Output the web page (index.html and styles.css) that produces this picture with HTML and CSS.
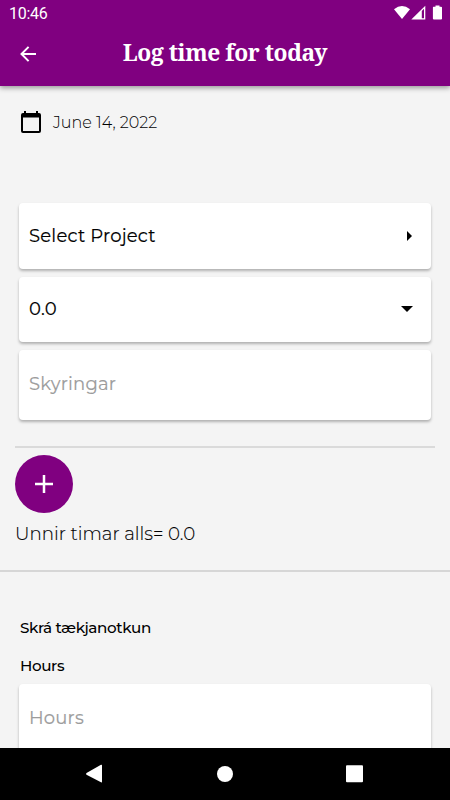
FILE: index.html
```
<!DOCTYPE html>
<html lang="en">
<head>
<meta charset="utf-8">
<title>Log time for today</title>
<link rel="stylesheet" href="styles.css">
</head>
<body>
<div class="screen">
  <header class="header">
    <div class="status">
      <span class="clock">10:46</span>
      <svg class="status-icons" width="48" height="16" viewBox="0 0 48 16">
        <path d="M0 4.2Q8-2.2 16 4.2L8 14Z"/>
        <path fill-rule="evenodd" d="M17.3 14.6L31.3.7V14.6ZM27.8 6V13.3H30V3.8Z"/>
        <path d="M39.5 1.8h2V.5h4v1.3h1.6a1 1 0 0 1 1 1v10.7a1 1 0 0 1-1 1h-7.2a1 1 0 0 1-1-1V2.8a1 1 0 0 1 .6-1Z"/>
      </svg>
    </div>
    <div class="toolbar">
      <svg class="back" width="16" height="16" viewBox="0 0 16 16"><path d="M8.6 .9L1.5 8l7.1 7.1M1.5 8H16"/></svg>
      <h1 class="title"><span class="title-text">Log time for today</span></h1>
    </div>
  </header>
  <main class="content">
    <div class="date">
      <svg width="22" height="24" viewBox="0 0 22 24"><path fill-rule="evenodd" d="M4 1h2v2h10V1h2v2h1a2 2 0 0 1 2 2v16a2 2 0 0 1-2 2H3a2 2 0 0 1-2-2V5a2 2 0 0 1 2-2h1ZM3 7.5V21h16V7.5Z"/></svg>
      <span class="text date-text">June 14, 2022</span>
    </div>
    <div class="card">
      <span class="text project">Select Project</span>
      <svg class="right" width="5" height="10" viewBox="0 0 5 10"><path d="M0 0L5 5L0 10Z"/></svg>
    </div>
    <div class="card">
      <span class="text amount">0.0</span>
      <svg class="down" width="12" height="6" viewBox="0 0 12 6"><path d="M0 0H12L6 6Z"/></svg>
    </div>
    <div class="card tall"><span class="text hint note">Skyringar</span></div>
    <div class="rule"></div>
    <div class="add"><svg width="18" height="18" viewBox="0 0 18 18"><path d="M9 0V18M0 9H18"/></svg></div>
    <p class="text total">Unnir timar alls= 0.0</p>
    <div class="rule full"></div>
    <p class="text label equipment">Skrá tækjanotkun</p>
    <p class="text label hours">Hours</p>
    <div class="card tall last"><span class="text hint hours-hint">Hours</span></div>
  </main>
  <nav class="nav">
    <svg width="450" height="52" viewBox="0 0 450 52"><path d="M86.5 25L101 16.8Q102 16.3 102 17.5V33.5Q102 35 101 34.3L86.5 26.8Q85.5 26 86.5 25Z"/><circle cx="225" cy="26" r="8"/><rect x="346" y="17.3" width="17" height="17" rx="1"/></svg>
  </nav>
</div>
</body>
</html>
```
FILE: styles.css
```
* { box-sizing: border-box; }
body { margin: 0; }
h1, p { margin: 0; }
svg { display: block; flex: none; }
.screen {
  width: 450px;
  height: 800px;
  display: flex;
  flex-direction: column;
  overflow: hidden;
  background: #f4f4f4;
  color: #000;
  font-family: Montserrat, Inter, sans-serif;
}
.header {
  position: relative;
  height: 86px;
  flex: none;
  background: #800080;
  color: #fff;
  box-shadow: 0 2px 5px rgba(0,0,0,.38);
}
.status {
  height: 28px;
  display: flex;
  justify-content: space-between;
  align-items: flex-start;
  padding: 5px 8px 0 9px;
}
.clock { font: 16px/18px Roboto, sans-serif; letter-spacing: -.25px; }
.status-icons { fill: #fff; }
.toolbar {
  height: 52px;
  display: grid;
  grid-template-columns: 16px 1fr 16px;
  align-items: center;
  padding: 0 20px;
}
.back { fill: none; stroke: #fff; stroke-width: 2; }
.title {
  display: flex;
  justify-content: center;
  padding-bottom: 2px;
  font: bold 22.8px/30px "Noto Serif", "Droid Serif", "DejaVu Serif", serif;
  letter-spacing: -.42px;
}
.text { display: block; white-space: nowrap; width: max-content; }
.content { flex: 1; min-height: 0; overflow: hidden; }
.date {
  height: 24px;
  display: flex;
  align-items: center;
  gap: 11px;
  margin: 24px 0 69px 20px;
}
.date-text { font-size: 16px; font-weight: 300; }
.card {
  height: 66px;
  margin: 0 19px 8px;
  padding: 0 19px 0 10px;
  display: flex;
  justify-content: space-between;
  align-items: center;
  border-radius: 4px;
  background: #fff;
  box-shadow: 0 2px 3px rgba(0,0,0,.28);
}
.card:not(.tall) { height: 65.5px; }
.card.tall { height: 70px; padding-bottom: 3px; }
.down { margin-right: -1px; }
.project, .amount, .note, .hours-hint { font-size: 18px; font-weight: 400; letter-spacing: .2px; -webkit-text-stroke: .15px currentColor; }
.hint { color: #9c9c9c; }
.rule { height: 2px; margin: 26px 15px 7px; background: #dadada; }
.rule.full { margin: 0; background: #d6d6d6; }
.add {
  width: 58px;
  height: 58px;
  margin-left: 15px;
  border-radius: 50%;
  background: #800080;
  display: flex;
  align-items: center;
  justify-content: center;
}
.add path { stroke: #fff; stroke-width: 2.5; }
.total { margin: 9px 0 25px 15px; font-size: 18.2px; line-height: 23px; font-weight: 300; -webkit-text-stroke: .12px currentColor; }
.label { font-size: 15.2px; line-height: 20px; margin-left: 20px; font-weight: 500; letter-spacing: -.38px; }
.equipment { margin-top: 46px; }
.hours { margin-top: 18px; margin-bottom: 8px; }
.nav { height: 52px; flex: none; background: #000; }
.nav svg { fill: #fff; }
```
